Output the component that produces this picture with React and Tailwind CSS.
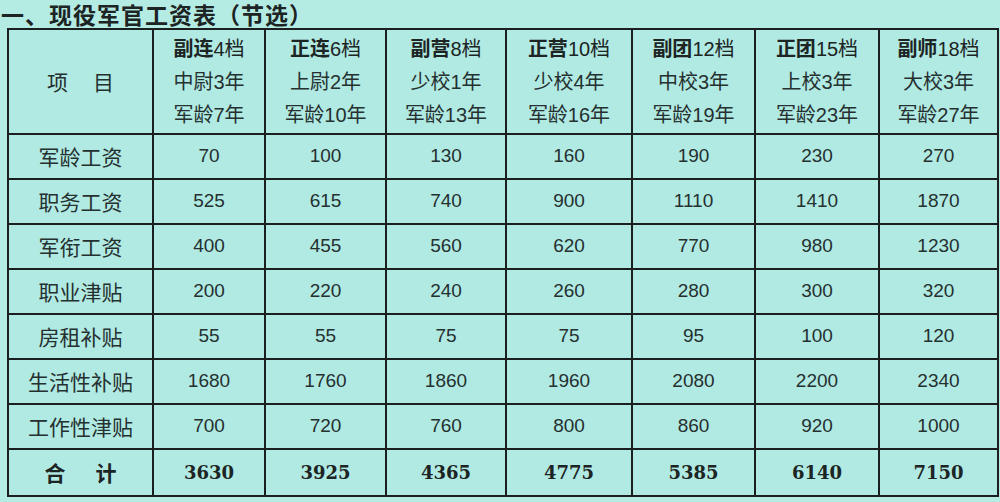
import React from 'react';

const cols = [
  { rank: '副连', grade: '4档', title: '中尉3年', age: '军龄7年' },
  { rank: '正连', grade: '6档', title: '上尉2年', age: '军龄10年' },
  { rank: '副营', grade: '8档', title: '少校1年', age: '军龄13年' },
  { rank: '正营', grade: '10档', title: '少校4年', age: '军龄16年' },
  { rank: '副团', grade: '12档', title: '中校3年', age: '军龄19年' },
  { rank: '正团', grade: '15档', title: '上校3年', age: '军龄23年' },
  { rank: '副师', grade: '18档', title: '大校3年', age: '军龄27年' },
];

const widths = [145, 112, 121, 120, 126, 123, 124, 119];

const rows = [
  ['军龄工资', 70, 100, 130, 160, 190, 230, 270],
  ['职务工资', 525, 615, 740, 900, 1110, 1410, 1870],
  ['军衔工资', 400, 455, 560, 620, 770, 980, 1230],
  ['职业津贴', 200, 220, 240, 260, 280, 300, 320],
  ['房租补贴', 55, 55, 75, 75, 95, 100, 120],
  ['生活性补贴', 1680, 1760, 1860, 1960, 2080, 2200, 2340],
  ['工作性津贴', 700, 720, 760, 800, 860, 920, 1000],
];

const totals = [3630, 3925, 4365, 4775, 5385, 6140, 7150];

const cjk = "font-['Noto_Sans_CJK_SC',sans-serif]";
const num = "font-['Liberation_Sans','Noto_Sans_CJK_SC',sans-serif]";

export default function App() {
  return (
    <div className="w-[1000px] h-[502px] bg-[#b4ebe3] overflow-hidden">
      <div className={`h-[28px] pl-[1px] text-[23px] leading-[28px] tracking-[1px] font-bold text-[#1c2424] ${cjk}`}>
        一、现役军官工资表（节选）
      </div>
      <table className="ml-[7px] w-[990px] table-fixed border-collapse bg-[#b1eae2] text-[#253030]">
        <colgroup>
          {widths.map((w, i) => (
            <col key={i} style={{ width: w }} />
          ))}
        </colgroup>
        <thead>
          <tr className="h-[105px]">
            <th className={`border-2 border-[#1b1f1f] font-normal text-[21px] ${cjk}`}>
              <div className="flex justify-center gap-[25px]">
                <span>项</span>
                <span>目</span>
              </div>
            </th>
            {cols.map((c) => (
              <th key={c.rank} className={`border-2 border-[#1b1f1f] font-normal text-[20px] leading-[33px] ${num}`}>
                <div className="text-[#1c2424]">
                  <span className={`font-bold ${cjk}`}>{c.rank}</span>
                  <span>{c.grade}</span>
                </div>
                <div>{c.title}</div>
                <div>{c.age}</div>
              </th>
            ))}
          </tr>
        </thead>
        <tbody>
          {rows.map((r) => (
            <tr key={r[0]} className="h-[45px]">
              <td className={`border-2 border-[#1b1f1f] text-center text-[21px] ${cjk}`}>{r[0]}</td>
              {r.slice(1).map((v, i) => (
                <td key={i} className={`border-2 border-[#1b1f1f] text-center text-[19px] ${num}`}>
                  {v}
                </td>
              ))}
            </tr>
          ))}
          <tr className="h-[47px]">
            <td className={`border-2 border-[#1b1f1f] text-[21px] font-bold ${cjk}`}>
              <div className="flex justify-center gap-[30px] text-[#1c2424]">
                <span>合</span>
                <span>计</span>
              </div>
            </td>
            {totals.map((v) => (
              <td key={v} className="border-2 border-[#1b1f1f] text-center text-[18px] font-bold text-[#1c2424] font-['DejaVu_Serif',serif]">
                {v}
              </td>
            ))}
          </tr>
        </tbody>
      </table>
    </div>
  );
}
